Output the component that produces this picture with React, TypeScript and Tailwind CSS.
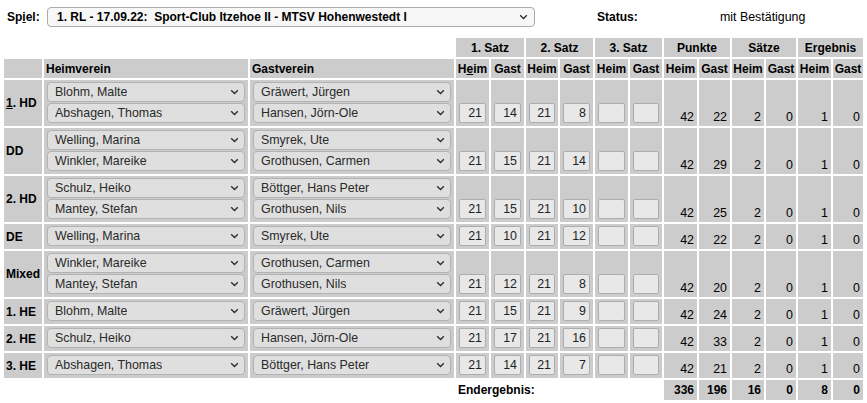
import React from "react";

type Row = {
  label: React.ReactNode;
  heim: string[];
  gast: string[];
  sets: string[];
  res: number[];
};

const rows: Row[] = [
  { label: <><span className="underline">1</span>. HD</>, heim: ["Blohm, Malte", "Abshagen, Thomas"], gast: ["Gräwert, Jürgen", "Hansen, Jörn-Ole"], sets: ["21", "14", "21", "8", "", ""], res: [42, 22, 2, 0, 1, 0] },
  { label: "DD", heim: ["Welling, Marina", "Winkler, Mareike"], gast: ["Smyrek, Ute", "Grothusen, Carmen"], sets: ["21", "15", "21", "14", "", ""], res: [42, 29, 2, 0, 1, 0] },
  { label: "2. HD", heim: ["Schulz, Heiko", "Mantey, Stefan"], gast: ["Böttger, Hans Peter", "Grothusen, Nils"], sets: ["21", "15", "21", "10", "", ""], res: [42, 25, 2, 0, 1, 0] },
  { label: "DE", heim: ["Welling, Marina"], gast: ["Smyrek, Ute"], sets: ["21", "10", "21", "12", "", ""], res: [42, 22, 2, 0, 1, 0] },
  { label: "Mixed", heim: ["Winkler, Mareike", "Mantey, Stefan"], gast: ["Grothusen, Carmen", "Grothusen, Nils"], sets: ["21", "12", "21", "8", "", ""], res: [42, 20, 2, 0, 1, 0] },
  { label: "1. HE", heim: ["Blohm, Malte"], gast: ["Gräwert, Jürgen"], sets: ["21", "15", "21", "9", "", ""], res: [42, 24, 2, 0, 1, 0] },
  { label: "2. HE", heim: ["Schulz, Heiko"], gast: ["Hansen, Jörn-Ole"], sets: ["21", "17", "21", "16", "", ""], res: [42, 33, 2, 0, 1, 0] },
  { label: "3. HE", heim: ["Abshagen, Thomas"], gast: ["Böttger, Hans Peter"], sets: ["21", "14", "21", "7", "", ""], res: [42, 21, 2, 0, 1, 0] },
];

function Chevron() {
  return (
    <svg width="9" height="6" viewBox="0 0 9 6" className="shrink-0">
      <path d="M1.2 1.3 L4.5 4.5 L7.8 1.3" fill="none" stroke="#2b2b2b" strokeWidth="1.3" />
    </svg>
  );
}

function Sel({ text }: { text: string }) {
  return (
    <div className="flex h-[20px] items-center justify-between rounded-[4px] border border-[#b2b2b2] bg-[#dfdfdf] pl-[7px] pr-[5px] text-[12.4px] text-[#2a2a2a]">
      <span className="truncate leading-[18px]">{text}</span>
      <Chevron />
    </div>
  );
}

function Inp({ v }: { v: string }) {
  return (
    <div className="h-[20px] w-full rounded-[2px] border border-[#adadad] bg-[#e8e8e8] pr-[3px] text-right text-[12.4px] leading-[18px] text-[#222]">
      {v}
    </div>
  );
}

export default function App() {
  const cell = "bg-[#cccccc]";
  return (
    <div className="min-h-[403px] w-[867px] bg-white text-[12px] text-black" style={{ fontFamily: '"Liberation Sans", Arial, sans-serif' }}>
      <div className="flex h-[36px] items-start pt-[7px]">
        <div className="ml-[7px] flex h-[20px] w-[40px] items-center font-bold">
          Sp<span className="underline">i</span>el:
        </div>
        <div className="flex h-[20px] w-[488px] items-center justify-between rounded-[4px] border border-[#ababab] bg-[#f7f7f7] pl-[9px] pr-[6px] font-bold">
          <span className="whitespace-pre leading-[18px]">1. RL - 17.09.22:  Sport-Club Itzehoe II - MTSV Hohenwestedt I</span>
          <Chevron />
        </div>
        <div className="ml-[62px] flex h-[20px] w-[123px] items-center font-bold">Status:</div>
        <div className="flex h-[20px] items-center text-[12.4px]">mit Bestätigung</div>
      </div>
      <table className="ml-[2px] table-fixed border-separate border-spacing-[2px]">
        <colgroup>
          <col className="w-[38px]" />
          <col className="w-[204px]" />
          <col className="w-[204px]" />
          <col className="w-[33px]" />
          <col className="w-[33px]" />
          <col className="w-[32px]" />
          <col className="w-[33px]" />
          <col className="w-[33px]" />
          <col className="w-[32px]" />
          <col className="w-[33px]" />
          <col className="w-[31px]" />
          <col className="w-[32px]" />
          <col className="w-[30px]" />
          <col className="w-[33px]" />
          <col className="w-[30px]" />
        </colgroup>
        <tbody>
          <tr className="h-[19px] font-bold">
            <td colSpan={3} className="p-0"></td>
            <td colSpan={2} className={`${cell} p-0 text-center`}>1. Satz</td>
            <td colSpan={2} className={`${cell} p-0 text-center`}>2. Satz</td>
            <td colSpan={2} className={`${cell} p-0 text-center`}>3. Satz</td>
            <td colSpan={2} className={`${cell} p-0 text-center`}>Punkte</td>
            <td colSpan={2} className={`${cell} p-0 text-center`}>Sätze</td>
            <td colSpan={2} className={`${cell} p-0 text-center`}>Ergebnis</td>
          </tr>
          <tr className="h-[19px] font-bold">
            <td className={`${cell} p-0`}></td>
            <td className={`${cell} px-[2px] py-0 text-left`}>Heimverein</td>
            <td className={`${cell} px-[2px] py-0 text-left`}>Gastverein</td>
            {Array.from({ length: 6 }).map((_, i) => (
              <React.Fragment key={i}>
                <td className={`${cell} p-0 text-center`}>
                  {i === 0 ? <>H<span className="underline">e</span>im</> : "Heim"}
                </td>
                <td className={`${cell} p-0 text-center`}>Gast</td>
              </React.Fragment>
            ))}
          </tr>
          {rows.map((r, ri) => {
            const h = r.heim.length > 1 ? "h-[46px]" : "h-[25px]";
            return (
              <tr key={ri} className={h}>
                <td className={`${cell} px-[2px] py-0 align-middle font-bold`}>{r.label}</td>
                <td className={`${cell} px-[3px] pt-0 pb-[3px] align-bottom`}>
                  <div className="flex flex-col gap-[1px]">
                    {r.heim.map((t, i) => <Sel key={i} text={t} />)}
                  </div>
                </td>
                <td className={`${cell} px-[3px] pt-0 pb-[3px] align-bottom`}>
                  <div className="flex flex-col gap-[1px]">
                    {r.gast.map((t, i) => <Sel key={i} text={t} />)}
                  </div>
                </td>
                {r.sets.map((s, i) => (
                  <td key={i} className={`${cell} px-[3px] pt-0 pb-[3px] align-bottom`}>
                    <Inp v={s} />
                  </td>
                ))}
                {r.res.map((n, i) => (
                  <td key={i} className={`${cell} pr-[3px] pl-0 pt-0 pb-[2px] text-right align-bottom text-[12.4px] leading-[14px]`}>{n}</td>
                ))}
              </tr>
            );
          })}
          <tr className="h-[20px] font-bold">
            <td colSpan={3} className="p-0"></td>
            <td colSpan={6} className="px-[2px] py-0 text-left">Endergebnis:</td>
            {[336, 196, 16, 0, 8, 0].map((n, i) => (
              <td key={i} className={`${cell} py-0 pr-[3px] pl-0 text-right`}>{n}</td>
            ))}
          </tr>
        </tbody>
      </table>
    </div>
  );
}
